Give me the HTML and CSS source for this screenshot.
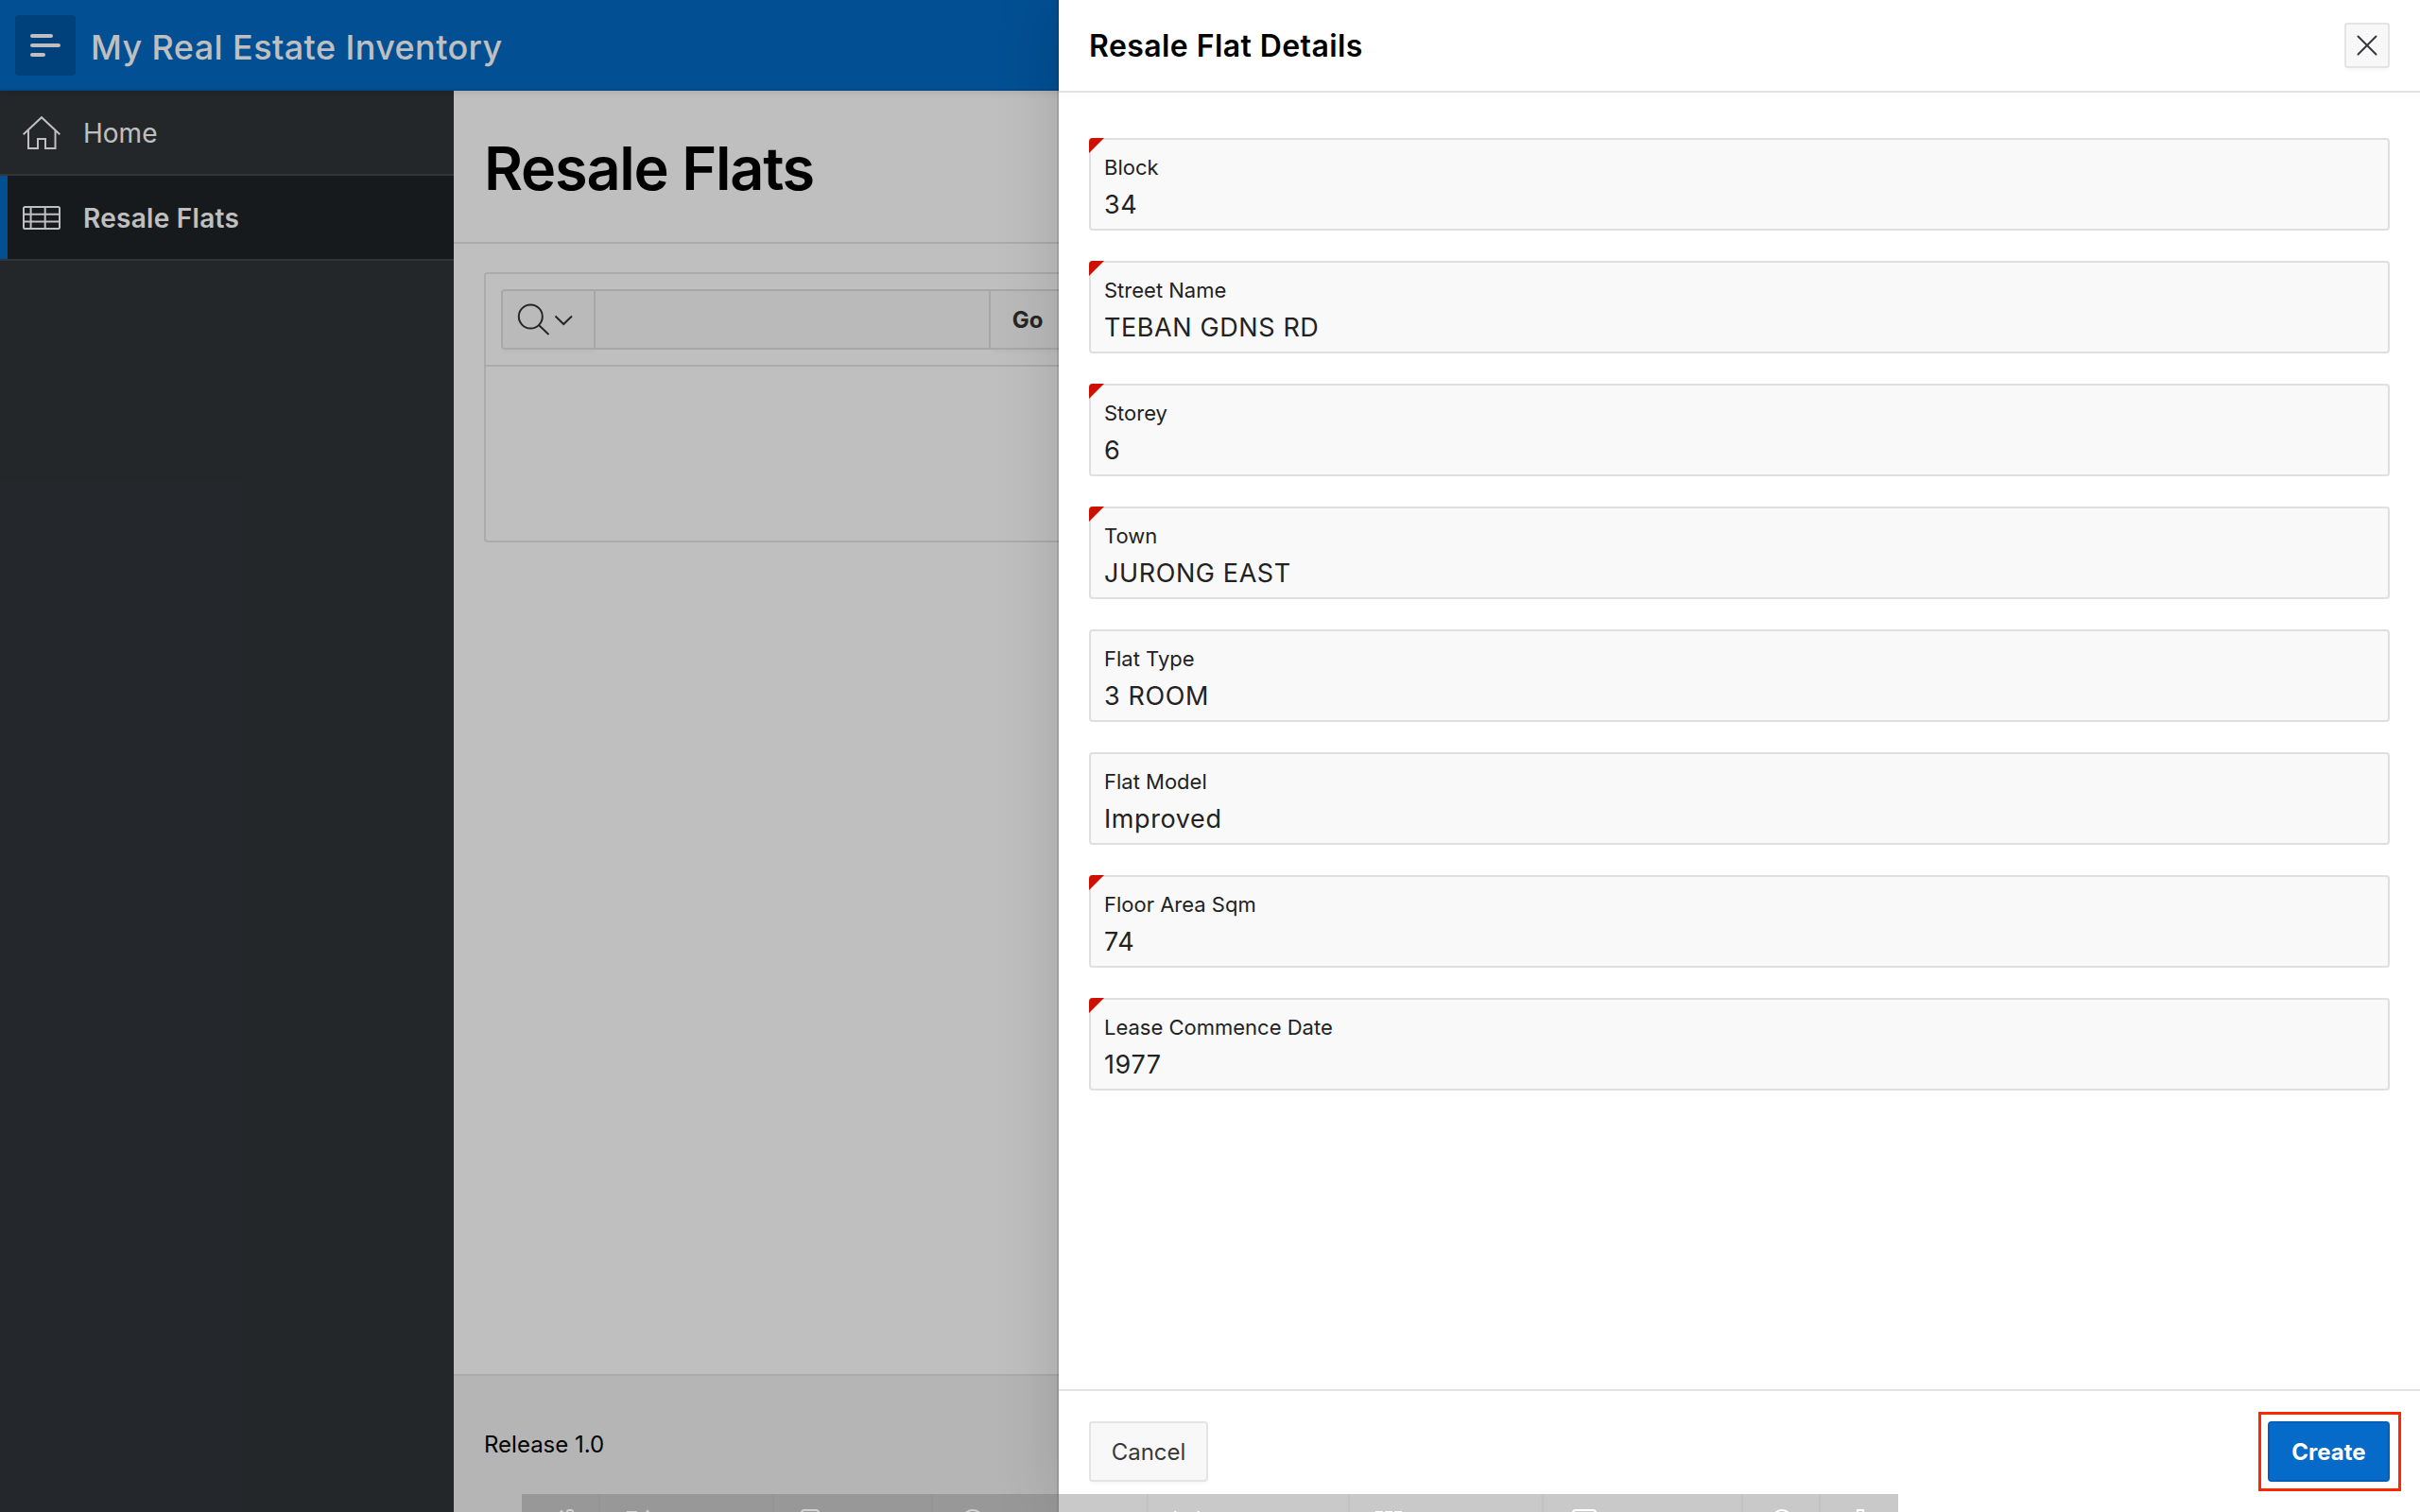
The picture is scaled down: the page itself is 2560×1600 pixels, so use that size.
FILE: index.html
```html
<!DOCTYPE html>
<html lang="en">
<head>
<meta charset="utf-8">
<title>Resale Flat Details</title>
<link rel="stylesheet" href="styles.css">
</head>
<body>
<div class="app">
  <header class="topbar">
    <button class="menu-btn" aria-label="Menu"><svg width="32" height="24" viewBox="0 0 32 24"><path d="M2 2H22M2 12H30M2 22H14" stroke="currentColor" stroke-width="4" stroke-linecap="round"/></svg></button>
    <span class="app-name">My Real Estate Inventory</span>
  </header>
  <div class="shell">
    <nav class="sidebar">
      <a class="nav-item"><svg width="40" height="38" viewBox="0 0 40 38"><path d="M.7 20.300L20 2.200L39.300 20.300M6 16V35H16V25H24V35H34.500V16" fill="none" stroke="currentColor" stroke-width="2"/></svg><span>Home</span></a>
      <a class="nav-item active"><svg width="40" height="38" viewBox="0 0 40 38"><path d="M2.500 7H37.500Q39 7 39 8.500V28.500Q39 30 37.500 30H2.500Q1 30 1 28.500V8.500Q1 7 2.500 7ZM1 14.700H39M1 22.400H39M8.600 7V30M23.700 7V30" fill="none" stroke="currentColor" stroke-width="2"/></svg><span>Resale Flats</span></a>
    </nav>
    <main class="main">
      <div class="title-bar"><h1>Resale Flats</h1></div>
      <div class="content">
        <section class="report">
          <div class="toolbar">
            <button class="find"><svg width="62" height="40" viewBox="0 0 62 40"><g fill="none" stroke="currentColor" stroke-width="2"><circle cx="15.300" cy="17" r="12.500"/><path d="M24 26L34.500 36M41.500 16.500L50.200 25L59 16.500"/></g></svg></button>
            <div class="query"></div>
            <button class="go">Go</button>
          </div>
        </section>
      </div>
      <footer class="footer">Release 1.0</footer>
    </main>
  </div>
</div>
<div class="overlay"></div>
<aside class="drawer">
  <header class="drawer-head"><h2>Resale Flat Details</h2><button class="close" aria-label="Close"><svg width="22" height="22" viewBox="0 0 22 22"><path d="M1.500 1.500L20.500 20.500M20.500 1.500L1.500 20.500" stroke="currentColor" stroke-width="2" stroke-linecap="round"/></svg></button></header>
  <div class="form">
    <div class="field required"><label>Block</label><span>34</span></div>
    <div class="field required"><label>Street Name</label><span>TEBAN GDNS RD</span></div>
    <div class="field required"><label>Storey</label><span>6</span></div>
    <div class="field required"><label>Town</label><span>JURONG EAST</span></div>
    <div class="field"><label>Flat Type</label><span>3 ROOM</span></div>
    <div class="field"><label>Flat Model</label><span>Improved</span></div>
    <div class="field required"><label>Floor Area Sqm</label><span>74</span></div>
    <div class="field required"><label>Lease Commence Date</label><span>1977</span></div>
  </div>
  <footer class="drawer-foot"><button class="cancel">Cancel</button><div class="highlight"><button class="create">Create</button></div></footer>
</aside>
<div class="devbar">
  <div class="tool w-home dim"><svg width="20" height="20" viewBox="0 0 20 20"><path d="M1 7L5 2L9 7M11 20V3Q11 1 13 1H15Q17 1 17 3V20"/></svg></div>
  <div class="tool w-page dim"><svg width="30" height="20" viewBox="0 0 30 20"><path d="M2 20V3H12M20 6L23 2L26 6"/></svg></div>
  <div class="tool w-session dim"><svg width="20" height="20" viewBox="0 0 20 20"><path d="M1 20V4Q1 1 4 1H16Q19 1 19 4V20"/></svg></div>
  <div class="tool w-debug dim"><svg width="24" height="24" viewBox="0 0 24 24"><circle cx="12" cy="12" r="11"/></svg></div>
  <div class="tool w-quick"><svg width="28" height="20" viewBox="0 0 28 20"><path d="M1 2L3 7M26 2L24 7"/></svg></div>
  <div class="tool w-custom"><svg width="28" height="20" viewBox="0 0 28 20"><path d="M0 3H8M10 3H18M20 3H28"/></svg></div>
  <div class="tool w-theme"><svg width="26" height="20" viewBox="0 0 26 20"><path d="M1 20V4Q1 1 4 1H22Q25 1 25 4V20"/></svg></div>
  <div class="tool w-info"><svg width="22" height="22" viewBox="0 0 22 22"><circle cx="11" cy="11" r="10"/></svg></div>
  <div class="tool w-gear"><svg width="10" height="20" viewBox="0 0 10 20"><path d="M1 8L2 1H8L9 8"/></svg></div>
</div>
</body>
</html>
```
FILE: styles.css
```css
* { box-sizing: border-box; }
body { margin: 0; width: 2560px; height: 1600px; overflow: hidden; font-family: Inter, sans-serif; font-size: 28px; color: #000; }
button { font: inherit; padding: 0; margin: 0; border: 0; color: inherit; }
svg { display: block; flex: none; }
h1, h2 { margin: 0; }

.app { height: 1600px; display: flex; flex-direction: column; }
.topbar { height: 96px; flex: none; display: flex; align-items: center; gap: 16px; padding-left: 16px; background: #036ac4; box-shadow: inset 0 -2px #0460b3, 0 2px 8px rgba(0,0,0,.1); position: relative; color: #fff; }
.menu-btn { width: 64px; height: 64px; border-radius: 4px; background: #0257a4; display: flex; align-items: center; justify-content: center; }
.app-name { font-size: 36px; font-weight: 500; letter-spacing: .4px; padding-top: 3px; }
.shell { flex: 1; display: flex; min-height: 0; }

.sidebar { width: 480px; background: #303439; color: #fff; }
.nav-item { height: 90px; border-bottom: 2px solid #42474b; display: flex; align-items: center; gap: 24px; padding: 2px 0 0 24px; }
.active { background: #1f2326; border-left: 0; box-shadow: inset 8px 0 #036ac4; font-weight: 600; letter-spacing: .28px; }

.main { flex: 1; display: flex; flex-direction: column; background: #fff; }
.title-bar { height: 162px; border-bottom: 2px solid #e4e4e4; padding: 44px 32px; }
h1 { font-size: 63px; line-height: 76px; font-weight: 600; letter-spacing: -1.25px; }
.content { flex: 1; padding: 30px 32px; }
.report { height: 286px; border: 2px solid #e4e4e4; border-radius: 4px; }
.toolbar { height: 98px; padding: 16px; border-bottom: 2px solid #e4e4e4; display: flex; }
.find, .query, .go { height: 64px; border: 2px solid #e0e0e0; background: #f9f9f9; }
.find { width: 100px; border-radius: 4px 0 0 4px; padding-left: 14px; color: #333; box-shadow: 0 4px 4px -2px rgba(0,0,0,.04); }
.query { width: 418px; border-left: 0; }
.go { width: 80px; border-left: 0; font-size: 24px; font-weight: 700; color: #333; box-shadow: 0 4px 4px -2px rgba(0,0,0,.04); }
.footer { height: 146px; border-top: 2px solid #e4e4e4; background: #f2f2f2; padding: 57px 32px; font-size: 24px; line-height: 32px; }

.overlay { position: absolute; inset: 0; background: rgba(0,0,0,.25); }
.drawer { position: absolute; left: 1120px; top: 0; width: 1440px; height: 1600px; background: #fff; display: flex; flex-direction: column; box-shadow: 0 0 0 2px rgba(0,0,0,.1), -8px 0 60px rgba(0,0,0,.12); }
.drawer-head { height: 98px; border-bottom: 2px solid #e4e4e4; display: flex; align-items: center; justify-content: space-between; padding: 0 32px; }
h2 { font-size: 32px; font-weight: 600; letter-spacing: .42px; padding-top: 1px; }
.close { width: 48px; height: 48px; border: 2px solid #e4e4e4; border-radius: 4px; background: #f8f8f8; display: flex; align-items: center; justify-content: center; color: #38383c; box-shadow: 0 4px 4px -2px rgba(0,0,0,.04); }
.form { flex: 1; padding: 48px 32px 0; display: flex; flex-direction: column; gap: 32px; }
.field { position: relative; height: 98px; border: 2px solid #dfdfdf; border-radius: 4px; background: #f9f9f9; padding: 15px 14px; display: flex; flex-direction: column; color: #222; }
.field label { font-size: 22px; line-height: 28px; }
.field span { font-size: 27px; line-height: 40px; margin-top: 6px; letter-spacing: .6px; }
.required::before { content: ""; position: absolute; left: -2px; top: -2px; width: 16px; height: 16px; background: #c10; border-top-left-radius: 4px; clip-path: polygon(0 0, 100% 0, 0 100%); }
.drawer-foot { height: 130px; border-top: 2px solid #e4e4e4; display: flex; align-items: center; justify-content: space-between; padding: 0 20px 0 32px; }
.cancel { width: 126px; height: 64px; border: 2px solid #e4e4e4; border-radius: 4px; background: #f8f8f8; font-size: 24px; color: #38383c; box-shadow: 0 4px 4px -2px rgba(0,0,0,.04); }
.highlight { border: 3px solid #ff2600; padding: 7px 9px 7px 7px; }
.create { width: 129px; height: 64px; border-radius: 4px; background: #056ac8; border: 2px solid #0460b6; color: #fff; font-size: 24px; font-weight: 700; }

.devbar { position: absolute; left: 552px; top: 1581px; width: 1456px; height: 19px; background: rgba(96,96,96,.34); display: flex; overflow: hidden; }
.tool { flex: none; padding-top: 16px; color: #fff; border-right: 2px solid rgba(96,96,96,.05); }
.tool:last-child { border-right: 0; }
.tool svg { fill: none; stroke: currentColor; stroke-width: 2; }
.dim { color: #cfcfcf; }
.w-home { width: 83px; padding-left: 37px; }
.w-page { width: 184px; padding-left: 27px; }
.w-session { width: 168px; padding-left: 28px; }
.w-debug { width: 228px; padding-left: 30px; }
.w-quick { width: 213px; padding-left: 27px; }
.w-custom { width: 205px; padding-left: 27px; }
.w-theme { width: 211px; padding-left: 30px; }
.w-info { width: 82px; padding-left: 30px; }
.w-gear { width: 82px; padding-left: 37px; }
```
